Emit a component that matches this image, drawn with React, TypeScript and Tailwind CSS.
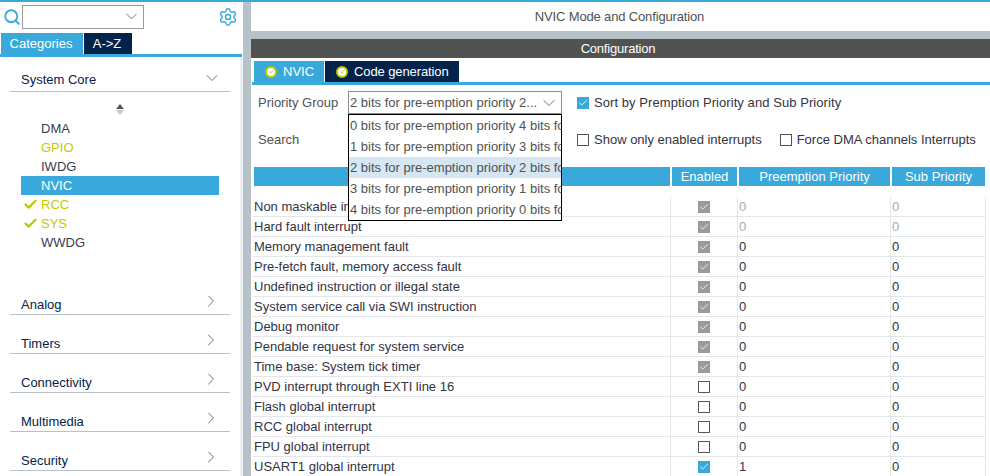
import { ChevronDown, ChevronRight, Search, Settings, Check } from "lucide-react";

const FONT = "font-['Liberation_Sans',Arial,sans-serif]";

const items = [
  { name: "DMA" },
  { name: "GPIO", tone: "warn" },
  { name: "IWDG" },
  { name: "NVIC", active: true },
  { name: "RCC", tone: "warn", ok: true },
  { name: "SYS", tone: "warn", ok: true },
  { name: "WWDG" },
];

const sections = ["Analog", "Timers", "Connectivity", "Multimedia", "Security"];

const options = [
  "0 bits for pre-emption priority 4 bits for subpriority",
  "1 bits for pre-emption priority 3 bits for subpriority",
  "2 bits for pre-emption priority 2 bits for subpriority",
  "3 bits for pre-emption priority 1 bits for subpriority",
  "4 bits for pre-emption priority 0 bits for subpriority",
];

// state: locked = grey ticked, off = empty, on = blue ticked
const rows = [
  { name: "Non maskable interrupt", state: "locked", pre: "0", sub: "0", dim: true },
  { name: "Hard fault interrupt", state: "locked", pre: "0", sub: "0", dim: true },
  { name: "Memory management fault", state: "locked", pre: "0", sub: "0" },
  { name: "Pre-fetch fault, memory access fault", state: "locked", pre: "0", sub: "0" },
  { name: "Undefined instruction or illegal state", state: "locked", pre: "0", sub: "0" },
  { name: "System service call via SWI instruction", state: "locked", pre: "0", sub: "0" },
  { name: "Debug monitor", state: "locked", pre: "0", sub: "0" },
  { name: "Pendable request for system service", state: "locked", pre: "0", sub: "0" },
  { name: "Time base: System tick timer", state: "locked", pre: "0", sub: "0" },
  { name: "PVD interrupt through EXTI line 16", state: "off", pre: "0", sub: "0" },
  { name: "Flash global interrupt", state: "off", pre: "0", sub: "0" },
  { name: "RCC global interrupt", state: "off", pre: "0", sub: "0" },
  { name: "FPU global interrupt", state: "off", pre: "0", sub: "0" },
  { name: "USART1 global interrupt", state: "on", pre: "1", sub: "0" },
];

function Box({ state }: { state: string }) {
  if (state === "off") {
    return <span className="block w-3 h-3 border border-[#555555] bg-white" />;
  }
  return (
    <span className={`flex items-center justify-center w-3 h-3 ${state === "on" ? "bg-[#39a9dc]" : "bg-[#999b9e]"}`}>
      <Check size={10} strokeWidth={2} className="text-white" />
    </span>
  );
}

function TabDot() {
  return (
    <span className="flex items-center justify-center w-3 h-3 rounded-full bg-white border-2 border-[#b9c800]">
      <Check size={7} strokeWidth={3} className="text-[#b9c800]" />
    </span>
  );
}

function Sidebar() {
  return (
    <div className="w-[243px] shrink-0 flex flex-col bg-white">
      <div className="flex items-center h-[31px] pb-[2px] pl-[3px]">
        <Search size={18} strokeWidth={2.5} className="text-[#39a9dc] shrink-0" />
        <div className="ml-px w-[122px] h-6 border border-[#9a9a9a] flex items-center justify-end pr-[2px]">
          <ChevronDown size={19} strokeWidth={1} className="text-[#555555]" />
        </div>
        <Settings size={20} strokeWidth={1.75} className="ml-[74px] text-[#39a9dc]" />
      </div>
      <div className="flex h-[21px] pl-px gap-px text-white">
        <div className="w-[82px] bg-[#39a9dc] flex items-center justify-center pr-[2px]">Categories</div>
        <div className="w-[48px] bg-[#03234b] flex items-center justify-center pr-[2px]">A-&gt;Z</div>
      </div>
      <div className="h-[3px] w-[242px] bg-[#39a9dc]" />
      <div className="flex-1 border-r-[3px] border-[#eef1f3]">
        <div className="mx-[10px] mt-[13px] h-[22px] border-b border-[#b7c2c8] flex justify-between pl-[11px] pr-[8px] text-[#03234b]">
          <span className="leading-[20px]">System Core</span>
          <ChevronDown size={20} strokeWidth={1} className="text-[#555555] -mt-[2px]" />
        </div>
        <div className="flex flex-col items-center h-[25px] pt-[12px] text-[#555555]">
          <span className="w-0 h-0 border-x-[4px] border-x-transparent border-b-[5px] border-b-[#555555]" />
          <span className="w-0 h-0 mt-px border-x-[4px] border-x-transparent border-t-[5px] border-t-[#c8c8c8]" />
        </div>
        <div className="mt-[2px]">
          {items.map((it) => (
            <div
              key={it.name}
              className={`ml-[21px] w-[198px] h-[19px] flex items-center relative pl-5 pb-px ${
                it.active ? "bg-[#39a9dc] text-white" : it.tone === "warn" ? "text-[#bfcc00]" : "text-[#3c3c50]"
              }`}
            >
              {it.ok && <Check size={15} strokeWidth={3.5} className="absolute left-[2px] text-[#b9c800]" />}
              {it.name}
            </div>
          ))}
        </div>
        <div className="mt-[24px]">
          {sections.map((s) => (
            <div
              key={s}
              className="mx-[10px] h-[39px] border-b border-[#b7c2c8] flex items-end justify-between pb-[3px] pl-[11px] pr-[9px] text-[#03234b]"
            >
              <span>{s}</span>
              <ChevronRight size={20} strokeWidth={1} className="text-[#555555]" />
            </div>
          ))}
        </div>
      </div>
    </div>
  );
}

function Table() {
  return (
    <div className="ml-[2px] mt-[16px] w-[733px] shrink-0">
      <div className="flex h-[19px] gap-[2px] ml-px text-white">
        <div className="w-[416px] bg-[#39a9dc]" />
        <div className="w-[65px] bg-[#39a9dc] flex items-center justify-center">Enabled</div>
        <div className="w-[151px] bg-[#39a9dc] flex items-center justify-center">Preemption Priority</div>
        <div className="w-[93px] bg-[#39a9dc] flex items-center justify-center">Sub Priority</div>
      </div>
      <div className="mt-[11px]">
        {rows.map((r) => (
          <div key={r.name} className="flex h-[20px] border-b border-r border-[#e3e6ea]">
            <div className="w-[417px] pl-px flex items-center text-[#333344] whitespace-nowrap overflow-hidden">{r.name}</div>
            <div className="w-[68px] border-x border-[#e3e6ea] flex items-center justify-center">
              <Box state={r.state} />
            </div>
            <div className={`w-[153px] border-r border-[#e3e6ea] pl-[1px] flex items-center ${r.dim ? "text-[#a4abb0]" : "text-[#333344]"}`}>{r.pre}</div>
            <div className={`flex-1 pl-[1px] flex items-center ${r.dim ? "text-[#a4abb0]" : "text-[#333344]"}`}>{r.sub}</div>
          </div>
        ))}
      </div>
    </div>
  );
}

function Main() {
  return (
    <div className="flex-1 flex flex-col min-w-0 bg-white">
      <div className="h-[29px] shrink-0 pr-[2px] flex items-center justify-center text-[#4f5251] tracking-[-0.15px]">NVIC Mode and Configuration</div>
      <div className="h-2 shrink-0 bg-[#b7c2c8]" />
      <div className="h-[19px] shrink-0 pr-[5px] bg-[#505352] text-white flex items-center justify-center tracking-[-0.2px]">Configuration</div>
      <div className="flex h-[21px] shrink-0 mt-[3px] ml-[3px] gap-px text-white">
        <div className="w-[70px] bg-[#39a9dc] flex items-center pl-[11px] gap-[6px]">
          <TabDot />
          NVIC
        </div>
        <div className="w-[134px] bg-[#03234b] flex items-center pl-[11px] gap-[6px] tracking-[-0.1px]">
          <TabDot />
          Code generation
        </div>
      </div>
      <div className="h-[3px] shrink-0 ml-px bg-[#39a9dc]" />
      <div className="flex items-center shrink-0 mt-[6px] h-[23px] pl-[7px] text-[#4f5251]">
        <span className="w-[90px]">Priority Group</span>
        <div className="relative w-[214px] h-[23px] border border-[#8f8f8f] flex items-center pl-px pr-[2px] justify-between">
          <span className="whitespace-nowrap">2 bits for pre-emption priority 2...</span>
          <ChevronDown size={20} strokeWidth={1} className="text-[#555555]" />
          <div className="absolute left-[-1px] top-[22px] w-[214px] border border-black bg-white z-10 overflow-hidden">
            {options.map((o, i) => (
              <div key={o} className={`h-[21px] pl-px flex items-center whitespace-nowrap ${i === 2 ? "bg-[#d6e6f3]" : ""}`}>{o}</div>
            ))}
          </div>
        </div>
        <div className="ml-[15px] flex items-center gap-[5px] text-[#333344] tracking-[0.07px]">
          <Box state="on" />
          Sort by Premption Priority and Sub Priority
        </div>
      </div>
      <div className="flex items-center shrink-0 mt-[14px] h-[23px] pl-[7px] text-[#4f5251]">
        <span className="w-[319px]">Search</span>
        <div className="flex items-center gap-[5px] text-[#333344]">
          <Box state="off" />
          Show only enabled interrupts
        </div>
        <div className="ml-[18px] flex items-center gap-[5px] text-[#333344]">
          <Box state="off" />
          Force DMA channels Interrupts
        </div>
      </div>
      <Table />
    </div>
  );
}

export default function App() {
  return (
    <div className={`${FONT} w-[990px] h-[476px] overflow-hidden flex flex-col text-[13px] leading-none`}>
      <div className="h-[2px] bg-[#39a9dc] shrink-0" />
      <div className="flex flex-1 min-h-0">
        <Sidebar />
        <div className="w-[8px] shrink-0 bg-[#b7c2c8]" />
        <Main />
      </div>
    </div>
  );
}
